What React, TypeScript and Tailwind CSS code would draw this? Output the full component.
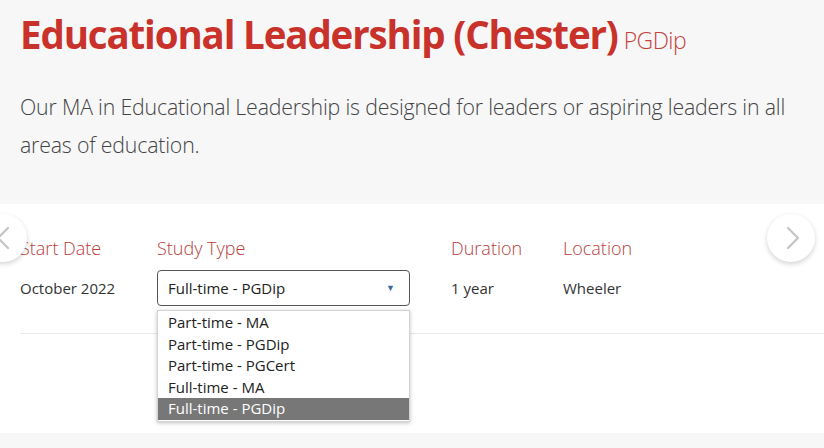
import { ChevronLeft, ChevronRight } from "lucide-react";

const OPTIONS = [
  "Part-time - MA",
  "Part-time - PGDip",
  "Part-time - PGCert",
  "Full-time - MA",
  "Full-time - PGDip",
];

function App() {
  const selected = "Full-time - PGDip";

  return (
    <div className="relative w-[824px] h-[448px] overflow-hidden bg-white font-['Open_Sans',sans-serif]">
      <div className="h-[204px] bg-[#f7f7f8] px-5 pt-[8px]">
        <h1 className="flex items-baseline gap-[6px] text-[#c8322a]">
          <span className="text-[38.5px] font-bold leading-[52px] tracking-[-1.15px]">
            Educational Leadership (Chester)
          </span>
          <span className="text-[23px] font-light text-[#c4433d] tracking-[-0.6px]">PGDip</span>
        </h1>
        <p className="mt-[28px] text-[21.3px] font-light leading-[38px] text-[#444] tracking-[-0.18px]">
          Our MA in Educational Leadership is designed for leaders or aspiring leaders in all
          areas of education.
        </p>
      </div>

      <div className="relative h-[229px] bg-white">
        <div className="flex px-5 pt-[31px]">
          <div className="w-[137px]">
            <div className="text-[18px] font-light text-[#b6403c]">Start Date</div>
            <div className="mt-[15px] text-[15px] text-[#333]">October 2022</div>
          </div>
          <div className="relative w-[294px]">
            <div className="text-[18px] font-light text-[#b6403c]">Study Type</div>
            <div className="mt-[8px] flex h-[36px] w-[253px] items-center justify-between rounded-[4px] border border-[#555] bg-white pl-[10px] pr-[14px] text-[15px] text-[#222]">
              <span>{selected}</span>
              <span className="text-[9px] text-[#3b6ea5]">▼</span>
            </div>
            <ul className="absolute left-0 top-[75px] z-10 w-[253px] border border-[#d4d4d4] bg-white py-[1px] text-[15px] leading-[21.5px] text-[#222] shadow-[0_1px_4px_rgba(0,0,0,0.25)]">
              {OPTIONS.map((o) => (
                <li
                  key={o}
                  className={
                    o === selected
                      ? "bg-[#777] pl-[10px] text-white"
                      : "pl-[10px]"
                  }
                >
                  {o}
                </li>
              ))}
            </ul>
          </div>
          <div className="w-[112px]">
            <div className="text-[18px] font-light text-[#b6403c]">Duration</div>
            <div className="mt-[15px] text-[15px] text-[#333]">1 year</div>
          </div>
          <div>
            <div className="text-[18px] font-light text-[#b6403c]">Location</div>
            <div className="mt-[15px] text-[15px] text-[#333]">Wheeler</div>
          </div>
        </div>
        <div className="ml-5 mt-[27px] border-t border-[#e8e8e8]" />

        <button className="absolute left-[-21px] top-[10px] flex h-[48px] w-[48px] items-center justify-center rounded-full bg-white shadow-[0_2px_5px_rgba(0,0,0,0.18)]">
          <ChevronLeft size={40} strokeWidth={1.3} color="#c4c4c4" />
        </button>
        <button className="absolute right-[9px] top-[10px] flex h-[48px] w-[48px] items-center justify-center rounded-full bg-white shadow-[0_2px_5px_rgba(0,0,0,0.18)]">
          <ChevronRight size={40} strokeWidth={1.3} color="#c4c4c4" className="ml-[3px]" />
        </button>
      </div>

      <div className="h-[15px] bg-[#f7f7f8]" />
    </div>
  );
}

export default App;
